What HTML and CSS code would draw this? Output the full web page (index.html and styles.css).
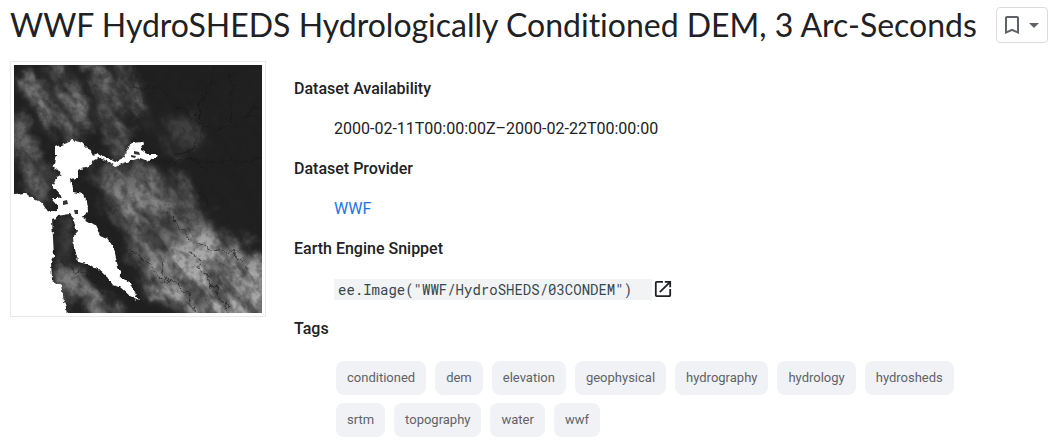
FILE: index.html
```html
<!DOCTYPE html>
<html lang="en">
<head>
<meta charset="utf-8">
<meta name="viewport" content="width=device-width, initial-scale=1">
<title>WWF HydroSHEDS Hydrologically Conditioned DEM, 3 Arc-Seconds</title>
<link rel="stylesheet" href="styles.css">
</head>
<body>
<main class="page">
  <header class="page-header">
    <h1 class="title">WWF HydroSHEDS Hydrologically Conditioned DEM, 3 Arc-Seconds</h1>
    <button class="bookmark" type="button" aria-label="Save page" aria-haspopup="menu">
      <svg width="24" height="24" viewBox="0 0 24 24" aria-hidden="true"><path fill="currentColor" d="M17 3H7c-1.100 0-2 .9-2 2v16l7-3 7 3V5c0-1.100-.9-2-2-2zm0 15-5-2.180L7 18V5h10v13z"/></svg>
      <svg width="20" height="24" viewBox="0 0 20 24" aria-hidden="true"><path fill="currentColor" d="M5 10l5 5 5-5z"/></svg>
    </button>
  </header>
  <div class="dataset">
    <svg class="thumbnail" viewBox="0 0 248 248" role="img" aria-label="Elevation map">
      <defs>
        <filter id="soft" x="-20%" y="-20%" width="140%" height="140%">
          <feGaussianBlur stdDeviation="6" result="blur"/>
          <feTurbulence type="fractalNoise" baseFrequency=".05" numOctaves="4" seed="12"/>
          <feDisplacementMap in="blur" scale="28" xChannelSelector="R" yChannelSelector="G"/>
        </filter>
        <filter id="fold" x="0" y="0" width="100%" height="100%">
          <feTurbulence type="fractalNoise" baseFrequency=".022 .06" numOctaves="5" seed="8"/>
          <feColorMatrix values="0 0 0 0 .12  0 0 0 0 .12  0 0 0 0 .12  3.600 0 0 0 -1.500"/>
        </filter>
        <filter id="grain" x="0" y="0" width="100%" height="100%">
          <feTurbulence type="fractalNoise" baseFrequency=".14" numOctaves="3" seed="3"/>
          <feColorMatrix values="0 0 0 0 .12  0 0 0 0 .12  0 0 0 0 .12  3 0 0 0 -1.200"/>
        </filter>
        <filter id="creek" x="-5%" y="-5%" width="110%" height="110%">
          <feTurbulence type="fractalNoise" baseFrequency=".09" numOctaves="3" seed="9"/>
          <feDisplacementMap in="SourceGraphic" scale="14" xChannelSelector="R" yChannelSelector="G"/>
          <feGaussianBlur stdDeviation=".6"/>
        </filter>
        <filter id="shore" x="-5%" y="-5%" width="110%" height="110%">
          <feTurbulence type="fractalNoise" baseFrequency=".2" numOctaves="2" seed="5"/>
          <feDisplacementMap in="SourceGraphic" scale="5" xChannelSelector="R" yChannelSelector="G"/>
        </filter>
      </defs>
      <rect width="248" height="248" fill="#212121"/>
      <g filter="url(#soft)" fill="none" stroke-linecap="round">
        <path stroke="#888" stroke-width="16" d="M14 16L34 42L54 70M40 4L54 26L70 52"/>
        <path stroke="#7c7c7c" stroke-width="14" d="M76-4L92 30L106 82M104-5L122 40"/>
        <path stroke="#686868" stroke-width="24" d="M0 62L14 88L30 124"/>
        <path stroke="#505050" stroke-width="14" d="M50 158L50 190"/>
        <path stroke="#858585" stroke-width="20" d="M50 212L92 250"/>
        <path fill="#6a6a6a" d="M76 102L128 98L176 124L200 162L256 196V256H164L124 204L104 164Z"/>
        <path fill="#a8a8a8" d="M134 194L190 170L256 202V256H174L150 236Z"/>
        <path stroke="#a0a0a0" stroke-width="8" d="M132 120L145 136L164 155M112 128L136 170L155 220"/>
        <circle cx="168" cy="68" r="22" fill="#404040"/>
        <circle cx="132" cy="61" r="4" fill="#585858"/>
      </g>
      <rect x="-130" y="-130" width="508" height="508" transform="rotate(54 124 124)" filter="url(#fold)" opacity=".6"/>
      <rect width="248" height="248" filter="url(#grain)" opacity=".35"/>
      <g filter="url(#creek)" fill="none" stroke="#171717" stroke-width="1" stroke-opacity=".7">
        <path d="M204-6L193 29L184 49L188 64L180 82L160 91M184 49L190 29M218 8L215 38L219 58M254 36L229 51L254 55M188 64L228 62M170 92L200 98L254 93"/>
        <path d="M116 22L146 22L158 38L177 48L185 62M122 82L143 96L180 94L196 110"/>
        <path d="M118 186L137 198L147 216L157 219L173 226L181 250M146 197L157 219M175 185L190 207L203 227L216 250M151 145L177 174L195 187L218 184L231 203M185 118L193 141"/>
        <path d="M46 195L70 210L93 232"/>
      </g>
      <path filter="url(#shore)" fill="#fff" d="M42 82L53 78L58 75L69 78L76 85L79 91L85 89L94 93L101 97L109 93L114 85L117 77L129 76L130 79L126 85L133 89L143 89L142 92L134 96L126 93L113 97L101 101L94 96L85 93L80 95L74 102L64 105L63 112L56 115L58 122L59 127L69 129L73 137L74 145L69 153L81 160L86 170L93 173L100 183L103 198L108 213L116 218L120 227L125 235L116 231L106 222L99 220L93 212L83 203L66 197L62 193L60 183L59 172L63 167L59 153L56 149L43 151L43 153L38 154L39 173L40 192L37 197L38 215L47 220L49 232L55 255H-8V129H0L11 128L18 133L28 138L34 147L43 146L43 140L38 133L44 133L48 132L39 122L39 120L43 112L48 109L46 106L39 102L42 90Z"/>
      <path fill="#333" d="M49 136l4-1 1 4-5 1zM60 145h4v4h-3zM120 86l5 1 1 3-6-1zM117 90l5 1-1 2-4-1z"/>
    </svg>
    <dl class="details">
      <dt>Dataset Availability</dt>
      <dd>2000-02-11T00:00:00Z–2000-02-22T00:00:00</dd>
      <dt>Dataset Provider</dt>
      <dd><a class="link" href="#wwf">WWF</a></dd>
      <dt>Earth Engine Snippet</dt>
      <dd class="snippet">
        <code class="code">ee.Image("WWF/HydroSHEDS/03CONDEM")</code>
        <a class="open" href="#editor" aria-label="Open in Code Editor"><svg width="18" height="18" viewBox="2 2 20 20" aria-hidden="true"><path fill="currentColor" d="M19 19H5V5h7V3H5a2 2 0 0 0-2 2v14a2 2 0 0 0 2 2h14c1.100 0 2-.9 2-2v-7h-2v7zM14 3v2h3.590l-9.830 9.830 1.410 1.410L19 6.410V10h2V3h-7z"/></svg></a>
      </dd>
      <dt>Tags</dt>
      <dd class="tags">
        <a class="chip" href="#conditioned">conditioned</a>
        <a class="chip" href="#dem">dem</a>
        <a class="chip" href="#elevation">elevation</a>
        <a class="chip" href="#geophysical">geophysical</a>
        <a class="chip" href="#hydrography">hydrography</a>
        <a class="chip" href="#hydrology">hydrology</a>
        <a class="chip" href="#hydrosheds">hydrosheds</a>
        <a class="chip" href="#srtm">srtm</a>
        <a class="chip" href="#topography">topography</a>
        <a class="chip" href="#water">water</a>
        <a class="chip" href="#wwf-tag">wwf</a>
      </dd>
    </dl>
  </div>
</main>
</body>
</html>
```
FILE: styles.css
```css
* {
  box-sizing: border-box;
}

body {
  margin: 0;
  background: #fff;
  color: #202124;
  font: 16px/24px Roboto, "Noto Sans", sans-serif;
}

.page {
  padding: 4px 8px 4px 10px;
}

.page-header {
  display: flex;
  align-items: center;
  justify-content: space-between;
  gap: 16px;
}

.title {
  margin: 0;
  font: 400 32px/42px "Google Sans", Lato, sans-serif;
  font-variant-ligatures: none;
}

.bookmark {
  display: flex;
  flex: none;
  align-items: center;
  height: 36px;
  padding: 0 3px;
  border: 1px solid #dadce0;
  border-radius: 4px;
  background: #fff;
  color: #5f6368;
}

.dataset {
  display: flex;
  align-items: flex-start;
  gap: 28px;
  padding-top: 15px;
}

.thumbnail {
  flex: none;
  width: 256px;
  height: 256px;
  padding: 3px;
  border: 1px solid #e8eaed;
}

.thumbnail filter {
  color-interpolation-filters: sRGB;
}

.thumbnail filter * {
  color-interpolation-filters: sRGB;
}

.details {
  flex: 1;
  min-width: 0;
  margin: 0;
  padding-top: 16px;
}

.details dt {
  margin-bottom: 16px;
  font-weight: 500;
}

.details dd {
  margin: 0 0 16px 40px;
}

.link {
  color: #1a73e8;
  text-decoration: none;
}

.details .snippet {
  display: flex;
  align-items: center;
  gap: 2px;
  min-height: 24px;
}

.code {
  padding: 0 20px 0 4px;
  background: #f1f3f4;
  color: #37474f;
  font: 400 14px/21px "Roboto Mono", "DejaVu Sans Mono", monospace;
}

.open {
  display: flex;
  color: #202124;
}

.details .tags {
  display: flex;
  flex-wrap: wrap;
  gap: 8px 9px;
  max-width: 640px;
  margin: 0 0 0 42px;
  padding-top: 4px;
}

.chip {
  padding: 5px 11px;
  border-radius: 8px;
  background: #f1f2f6;
  color: #5f6368;
  font-size: 13px;
  text-decoration: none;
}
```
